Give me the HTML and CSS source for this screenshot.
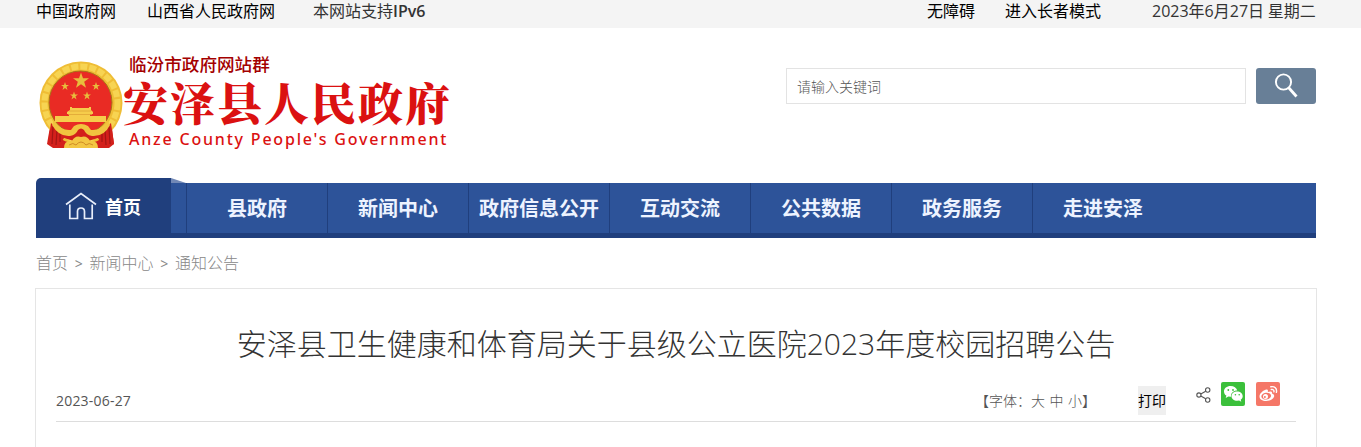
FILE: index.html
```html
<!DOCTYPE html>
<html lang="zh-CN">
<head>
  <meta charset="UTF-8">
  <meta name="viewport" content="width=device-width, initial-scale=1.0">
  <title>安泽县人民政府</title>
  <link rel="stylesheet" href="styles.css">
</head>
<body>
  <div class="topbar">
    <div class="wrap topbar-inner">
      <a class="top-gov">中国政府网</a>
      <a class="top-province">山西省人民政府网</a>
      <span class="top-ipv6">本网站支持<b>IPv6</b></span>
      <a class="top-access">无障碍</a>
      <a class="top-elder">进入长者模式</a>
      <span class="top-date"><b>2023</b>年<b>6</b>月<b>27</b>日 星期二</span>
    </div>
  </div>

  <div class="wrap header">
    <div class="logo">
      <svg class="emblem" width="84" height="90" viewBox="0 0 84 90">
        <path d="M12 60 L8 83 L14 87 L70 87 L75 83 L72 60Z" fill="#d3201b"/>
        <circle cx="42" cy="42" r="41.500" fill="#efbd35"/>
        <circle cx="42" cy="42" r="36.500" fill="none" stroke="#f7d452" stroke-width="6" stroke-dasharray="7 2"/>
        <circle cx="41.500" cy="41.500" r="31.500" fill="#e92b24" stroke="#a87318" stroke-width="1"/>
        <g fill="#e8bd3c">
          <path id="star" d="M0 -8.500 L2 -2.800 L8 -2.800 L3.200 .8 L5 6.800 L0 3.200 L-5 6.800 L-3.200 .8 L-8 -2.800 L-2 -2.800Z" transform="translate(42 20)"/>
          <path d="M26 21l1 3h3l-2.500 1.800 1 3.200-2.500-2-2.500 2 1-3.200L22 24h3z"/>
          <path d="M57 21l1 3h3l-2.500 1.800 1 3.200-2.500-2-2.500 2 1-3.200L53 24h3z"/>
          <path d="M35 30.500l1 3h3l-2.500 1.800 1 3.200-2.500-2-2.500 2 1-3.200-2.500-1.800h3z"/>
          <path d="M48 30.500l1 3h3l-2.500 1.800 1 3.200-2.500-2-2.500 2 1-3.200-2.500-1.800h3z"/>
        </g>
        <path d="M31 46h2v1h17v-1h2v3l2 2v2h-3v2h16v6H16v-6h14v-2h-2v-2l3-2z" fill="#f6cc4b"/>
        <path d="M30 50h22M29 53.500h24" stroke="#e0a436" stroke-width=".8"/>
        <path d="M12 62 L23 72 L33 70 L42 66 L51 70 L61 72 L72 62 L75 83 L66 87 L59 77 L49 80 L35 80 L25 77 L18 87 L9 83Z" fill="#d3201b"/>
        <path d="M14 66L13 83M18 69L17 84M21 72V81M70 66L71 83M66 69L67 84M63 72V81" stroke="#a31614" stroke-width="1.200"/>
        <path d="M15 60 Q22 70 32 69 L35 65 Q42 61 49 65 L52 69 Q62 70 69 60 L71 64 Q65 76 53 75 Q47 74 45 69 Q42 66 39 69 Q37 74 31 75 Q20 76 13 64Z" fill="#f1c43f"/>
        <path d="M25 87 Q25 79 33 80 Q36 74 42 76 Q48 74 51 80 Q59 79 59 87Z" fill="#f3c642"/>
        <path d="M30 84 Q34 81 37 84 Q42 78 47 84 Q50 81 54 84" fill="none" stroke="#cf8c25" stroke-width="1"/>
      </svg>
      <div class="logo-text">
        <div class="logo-group">临汾市政府网站群</div>
        <div class="logo-name">安泽县人民政府</div>
        <div class="logo-en">Anze County People's Government</div>
      </div>
    </div>
    <form class="search">
      <input type="text" class="search-input" placeholder="请输入关键词">
      <button type="button" class="search-btn">
        <svg width="24" height="26" viewBox="0 0 24 26" fill="none" stroke="#fff">
          <circle cx="9.500" cy="9" r="7.600" stroke-width="1.900"/>
          <path d="M14.500 14.500 L22.500 23.500" stroke-width="2.800"/>
        </svg>
      </button>
    </form>
  </div>

  <div class="wrap nav">
    <a class="nav-home">
      <svg width="32" height="28" viewBox="0 0 32 28" fill="none" stroke="#e8eefa" stroke-width="1.700">
        <path d="M1 12.500 L16 1.500 L31 12.500"/>
        <path d="M4.800 12.500V26.500H12.500V19.500Q12.500 16 16 16T19.500 19.500V26.500H27.200V12.500"/>
      </svg>
      <span>首页</span>
    </a>
    <div class="nav-bar">
      <a class="nav-item">县政府</a>
      <a class="nav-item">新闻中心</a>
      <a class="nav-item">政府信息公开</a>
      <a class="nav-item">互动交流</a>
      <a class="nav-item">公共数据</a>
      <a class="nav-item">政务服务</a>
      <a class="nav-item">走进安泽</a>
    </div>
  </div>

  <div class="wrap crumbs">
    <a>首页</a><i>&gt;</i><a>新闻中心</a><i>&gt;</i><a>通知公告</a>
  </div>

  <div class="article">
    <h1 class="title">安泽县卫生健康和体育局关于县级公立医院<span>2023</span>年度校园招聘公告</h1>
    <div class="meta">
      <span class="meta-date">2023-06-27</span>
      <span class="meta-size">【字体：<a>大</a> <a>中</a> <a>小</a>】</span>
      <button type="button" class="print-btn">打印</button>
      <div class="share">
        <svg class="share-icon" width="15" height="16" viewBox="0 0 15 16" fill="none" stroke="#555" stroke-width="1.100">
          <circle cx="2.900" cy="8" r="2.100"/>
          <circle cx="11.700" cy="3" r="2.200"/>
          <circle cx="11.700" cy="13" r="2.200"/>
          <path d="M4.800 7 L9.700 4.200 M4.800 9 L9.700 11.800"/>
        </svg>
        <svg class="share-wechat" width="24" height="24" viewBox="0 0 24 24">
          <rect width="24" height="24" rx="2" fill="#3bc03b"/>
          <path d="M9.500 4C5.800 4 3 6.300 3 9.400c0 1.800 1 3.300 2.400 4.200L4.700 16l2.700-1.500 2.600.3c-.4-4 2.900-6.300 6.300-6.200C15.600 5.900 12.900 4 9.500 4z" fill="#fff"/>
          <path d="M16.200 9.600c-3.300 0-5.700 2-5.700 4.600s2.400 4.600 5.700 4.600l1.900-.3 2.200 1.200-.6-2c1.300-.9 2-2.100 2-3.500 0-2.600-2.500-4.600-5.500-4.600z" fill="#fff"/>
          <g fill="#3bc03b"><circle cx="7.300" cy="8" r=".9"/><circle cx="12" cy="8" r=".9"/><circle cx="14.400" cy="12.800" r=".8"/><circle cx="18.200" cy="12.800" r=".8"/></g>
        </svg>
        <svg class="share-weibo" width="24" height="24" viewBox="0 0 24 24">
          <rect width="24" height="24" rx="2" fill="#f57767"/>
          <path d="M9.500 7.800c1.800-.6 2.800.2 2.300 2.100 2.600-1 4.800-.6 4.200 1.700 2 .6 2.700 2 1.800 3.700-1.200 2.300-4.300 3.600-7.600 3.600-3.900 0-6.700-1.700-6.700-4.500 0-2.600 3.200-5.700 6-6.600z" fill="#fff"/>
          <ellipse cx="10.200" cy="14.100" rx="4.900" ry="3.400" fill="#f57767" transform="rotate(-8 10.200 14.100)"/>
          <circle cx="9.500" cy="14.400" r="2.500" fill="#fff"/>
          <circle cx="8.900" cy="14.900" r="1" fill="#f57767"/>
          <path d="M14.800 4.800c3.700-.8 6.500 1.700 5.600 5.600M15.300 7.500c1.800-.4 3 .8 2.600 2.400" fill="none" stroke="#fff" stroke-width="1.400" stroke-linecap="round"/>
        </svg>
      </div>
    </div>
  </div>
</body>
</html>
```
FILE: styles.css
```css
* {
  box-sizing: border-box;
}

body {
  margin: 0;
  font-family: "Noto Sans", "Noto Sans CJK SC", sans-serif;
  font-size: 16px;
  color: #333;
  background-color: #fff;
  overflow: hidden;
}

.wrap {
  width: 1280px;
  margin-left: 36px;
}

/* top bar */
.topbar {
  height: 28px;
  background-color: #f4f4f4;
}

.topbar-inner {
  display: flex;
  height: 20px;
  line-height: 20px;
  white-space: nowrap;
  font-family: "Noto Sans CJK SC", sans-serif;
  font-weight: 400;
}

.topbar a {
  color: #000;
}

.top-gov {
  width: 111px;
}

.top-province {
  width: 166px;
}

.topbar b {
  font-family: "Open Sans", sans-serif;
  font-weight: 400;
}

.top-ipv6 b {
  font-weight: 600;
}

.top-access {
  margin-left: auto;
  width: 78px;
}

.top-elder {
  width: 147px;
}

.top-date {
  width: 164px;
}

/* header */
.header {
  display: flex;
  justify-content: space-between;
  height: 150px;
}

.logo {
  display: flex;
  padding: 25px 0 0 3px;
}

.emblem {
  margin-top: 8px;
}

.logo-text {
  color: #db1111;
  white-space: nowrap;
}

.logo-group {
  height: 22px;
  line-height: 22px;
  padding-left: 6px;
  color: #a40000;
  font-size: 17.6px;
  font-weight: 500;
  font-family: "Noto Sans CJK SC", sans-serif;
}

.logo-name {
  height: 53px;
  line-height: 53px;
  font-family: "Noto Serif CJK SC", "Noto Sans CJK SC", serif;
  font-weight: 900;
  font-size: 45px;
  letter-spacing: 2px;
}

.logo-en {
  height: 22px;
  line-height: 22px;
  padding-left: 6px;
  font-size: 16px;
  font-weight: 500;
  letter-spacing: 1.8px;
}

.search {
  display: flex;
  gap: 10px;
  padding-top: 40px;
}

.search-input {
  width: 460px;
  height: 36px;
  padding: 0 10px;
  border: 1px solid #e3e3e3;
  font-family: "Noto Sans CJK SC", sans-serif;
  font-size: 14px;
  font-weight: 300;
}

.search-input::placeholder {
  color: #555;
}

.search-btn {
  display: flex;
  justify-content: center;
  align-items: center;
  width: 60px;
  height: 36px;
  padding: 0;
  border: none;
  border-radius: 3px;
  background-color: #687f97;
}

/* navigation */
.nav {
  display: flex;
  align-items: flex-end;
  height: 60px;
  color: #fff;
  font-family: "Noto Sans CJK SC", sans-serif;
  font-weight: 700;
  white-space: nowrap;
}

.nav-home {
  display: flex;
  align-items: center;
  gap: 8px;
  width: 135px;
  height: 60px;
  padding: 0 0 4px 29px;
  border-radius: 5px 0 0 0;
  background-color: #203f7d;
  font-size: 18px;
}

.nav-bar {
  position: relative;
  display: flex;
  flex: 1;
  height: 55px;
  padding-left: 15px;
  border-bottom: 5px solid #203f7d;
  background-color: #2d5399;
}

/* folded corner behind the home tab */
.nav-bar::before {
  content: "";
  position: absolute;
  left: 0;
  top: -5px;
  width: 15px;
  height: 5px;
  background-color: #7188b6;
  clip-path: polygon(0 0, 100% 100%, 0 100%);
}

.nav-item {
  width: 141px;
  border-left: 1px solid #203f7d;
  color: #edf3ff;
  font-size: 20px;
  line-height: 50px;
  text-align: center;
}

.crumbs {
  display: flex;
  height: 50px;
  line-height: 49px;
  color: #888;
  font-family: "Noto Sans CJK SC", sans-serif;
  font-weight: 300;
}

.crumbs i {
  width: 21.5px;
  line-height: 51px;
  text-align: center;
  font-family: "Noto Sans", sans-serif;
  font-style: normal;
  font-size: 14px;
  font-weight: 400;
}

/* article */
.article {
  width: 1282px;
  height: 170px;
  margin-left: 35px;
  padding: 0 20px;
  border: 1px solid #e5e5e5;
}

.title {
  height: 92px;
  margin: 0;
  padding-top: 30px;
  line-height: 46px;
  font-family: "Noto Sans CJK SC", sans-serif;
  font-size: 30px;
  font-weight: 300;
  text-align: center;
  white-space: nowrap;
}

.title span {
  font-family: "Open Sans", sans-serif;
  font-weight: 300;
}

.meta {
  display: flex;
  height: 41px;
  border-bottom: 1px solid #ddd;
  color: #555;
  font-family: "Noto Sans CJK SC", sans-serif;
  font-size: 14px;
  font-weight: 300;
  line-height: 38px;
}

.meta-date {
  font-family: "Open Sans", sans-serif;
  font-weight: 400;
  line-height: 40px;
  letter-spacing: 0.2px;
}

.meta-size {
  width: 163px;
  margin-left: auto;
  white-space: nowrap;
  word-spacing: 1.4px;
}

.print-btn {
  width: 28px;
  height: 29px;
  margin-top: 5px;
  padding: 0 0 2px;
  border: none;
  background-color: #efefef;
  color: #000;
  font-family: "Noto Sans CJK SC", sans-serif;
  font-size: 14px;
  font-weight: 400;
}

.share {
  display: flex;
  width: 130px;
  padding: 1px 0 0 30px;
}

.share svg {
  flex: none;
}

.share-icon {
  margin: 5px 10px 0 0;
}

.share-wechat {
  margin-right: 11px;
}
```
